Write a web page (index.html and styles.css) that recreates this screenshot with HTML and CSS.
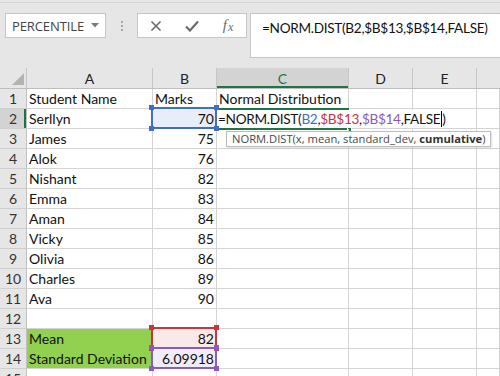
FILE: index.html
```html
<!DOCTYPE html>
<html>
<head>
<meta charset="utf-8">
<link rel="stylesheet" href="styles.css">
</head>
<body>
<div class="app">
  <div class="fbar">
    <div class="namebox">
      <span class="nb-text">PERCENTILE</span>
      <svg class="nb-arrow" width="8" height="5" viewBox="0 0 8 5"><path d="M0 0H8L4 4.5Z" fill="#7a7a7a"/></svg>
    </div>
    <div class="grip"><i></i><i></i><i></i></div>
    <div class="fxbox">
      <span class="fxbtn"><svg width="12" height="12" viewBox="0 0 12 12"><path d="M1.5 1.5L10.5 10.5M10.5 1.5L1.5 10.5" stroke="#6a6a6a" stroke-width="1.6" fill="none"/></svg></span>
      <span class="fxbtn"><svg width="14" height="12" viewBox="0 0 14 12"><path d="M1 6.5L5 10.5L13 1.5" stroke="#6a6a6a" stroke-width="2.2" fill="none"/></svg></span>
      <span class="fxbtn fx"><i>f</i><i class="x">x</i></span>
    </div>
    <div class="formula">=NORM.DIST(B2,$B$13,$B$14,FALSE)</div>
  </div>

  <div class="grid">
    <div class="ch corner"><svg width="12" height="12" viewBox="0 0 12 12"><path d="M12 0V12H0Z" fill="#b3b3b3"/></svg></div>
    <div class="ch">A</div>
    <div class="ch">B</div>
    <div class="ch ch-sel">C</div>
    <div class="ch">D</div>
    <div class="ch">E</div>
    <div class="ch ch-last"></div>

    <div class="rh">1</div><div class="c">Student Name</div><div class="c">Marks</div><div class="c">Normal Distribution</div><div class="c"></div><div class="c"></div><div class="c"></div>

    <div class="rh rh-sel">2</div><div class="c">Serllyn</div>
    <div class="c n sel-b2">70<span class="selbox blue"><b class="h tl"></b><b class="h tr"></b><b class="h bl"></b><b class="h br"></b></span></div>
    <div class="c edit"><span class="etext">=NORM.DIST(<span class="cb">B2</span>,<span class="cr">$B$13</span>,<span class="cp">$B$14</span>,FALSE<span class="caret"></span>)</span><b class="fill-h"></b></div>
    <div class="c"></div><div class="c"></div><div class="c"></div>

    <div class="rh">3</div><div class="c">James</div><div class="c n">75</div>
    <div class="c tipcell"><div class="tip">NORM.DIST(x, mean, standard_dev, <b>cumulative</b>)</div></div>
    <div class="c"></div><div class="c"></div><div class="c"></div>

    <div class="rh">4</div><div class="c">Alok</div><div class="c n">76</div><div class="c"></div><div class="c"></div><div class="c"></div><div class="c"></div>
    <div class="rh">5</div><div class="c">Nishant</div><div class="c n">82</div><div class="c"></div><div class="c"></div><div class="c"></div><div class="c"></div>
    <div class="rh">6</div><div class="c">Emma</div><div class="c n">83</div><div class="c"></div><div class="c"></div><div class="c"></div><div class="c"></div>
    <div class="rh">7</div><div class="c">Aman</div><div class="c n">84</div><div class="c"></div><div class="c"></div><div class="c"></div><div class="c"></div>
    <div class="rh">8</div><div class="c">Vicky</div><div class="c n">85</div><div class="c"></div><div class="c"></div><div class="c"></div><div class="c"></div>
    <div class="rh">9</div><div class="c">Olivia</div><div class="c n">86</div><div class="c"></div><div class="c"></div><div class="c"></div><div class="c"></div>
    <div class="rh">10</div><div class="c">Charles</div><div class="c n">89</div><div class="c"></div><div class="c"></div><div class="c"></div><div class="c"></div>
    <div class="rh">11</div><div class="c">Ava</div><div class="c n">90</div><div class="c"></div><div class="c"></div><div class="c"></div><div class="c"></div>
    <div class="rh">12</div><div class="c"></div><div class="c"></div><div class="c"></div><div class="c"></div><div class="c"></div><div class="c"></div>

    <div class="rh">13</div><div class="c green green-top">Mean</div>
    <div class="c n sel-red">82<span class="selbox red"><b class="h tl"></b><b class="h tr"></b><b class="h bl"></b><b class="h br"></b></span></div>
    <div class="c"></div><div class="c"></div><div class="c"></div><div class="c"></div>

    <div class="rh">14</div><div class="c green">Standard Deviation</div>
    <div class="c n sel-purple">6.09918<span class="selbox purple"><b class="h tl"></b><b class="h tr"></b><b class="h bl"></b><b class="h br"></b></span></div>
    <div class="c"></div><div class="c"></div><div class="c"></div><div class="c"></div>

    <div class="rh">15</div><div class="c"></div><div class="c"></div><div class="c"></div><div class="c"></div><div class="c"></div><div class="c"></div>
  </div>
</div>
</body>
</html>
```

FILE: styles.css
```css
* { box-sizing: border-box; }
html, body { margin: 0; padding: 0; }
body {
  width: 500px;
  height: 376px;
  overflow: hidden;
  background: #e6e6e6;
  font-family: "Lato", "Liberation Sans", sans-serif;
}
.app { width: 500px; }

/* formula bar */
.fbar {
  display: flex;
  align-items: flex-start;
  margin-top: 2px;
  border-top: 1px solid #d5d5d5;
  padding: 10px 0 10px 5px;
  height: 66px;
}
.namebox {
  width: 101px;
  height: 25px;
  background: #fff;
  border: 1px solid #c6c6c6;
  display: flex;
  align-items: center;
  justify-content: space-between;
  padding: 0 6px 0 6px;
  font-family: "Open Sans", "Noto Sans", sans-serif;
  font-size: 13px;
  color: #444;
}
.nb-text { letter-spacing: -0.1px; }
.grip {
  width: 31px;
  height: 25px;
  display: flex;
  flex-direction: column;
  align-items: center;
  justify-content: center;
  gap: 2px;
}
.grip i { display: block; width: 2px; height: 2px; background: #a8a8a8; }
.fxbox {
  width: 110px;
  height: 25px;
  background: #fff;
  border: 1px solid #c6c6c6;
  display: flex;
  align-items: center;
}
.fxbtn {
  width: 36px;
  height: 23px;
  display: flex;
  align-items: center;
  justify-content: center;
}
.fx {
  font-family: "Liberation Serif", serif;
  font-style: italic;
  color: #6a6a6a;
  font-size: 15px;
}
.fx i { font-style: italic; }
.fx .x { font-size: 12px; margin-left: 1px; margin-top: 3px; }
.formula {
  flex: 1;
  margin-left: 3px;
  height: 45px;
  background: #fff;
  border: 1px solid #c6c6c6;
  border-right: none;
  padding: 6px 0 0 11px;
  font-family: "Lato", "Liberation Sans", sans-serif;
  font-size: 13.6px;
  letter-spacing: -0.3px;
  color: #111;
  white-space: nowrap;
  overflow: hidden;
}

/* grid */
.grid {
  display: grid;
  grid-template-columns: 27px 126px 64px 132px 64px 64px 1fr;
  grid-template-rows: 21px repeat(15, 20px);
  background: #fff;
  font-size: 14px;
  color: #111;
}
.ch {
  background: #e6e6e6;
  border-right: 1px solid #c6c6c6;
  border-bottom: 1px solid #bdbdbd;
  display: flex;
  align-items: center;
  justify-content: center;
  color: #222;
  font-size: 14px;
  padding-top: 1px;
}
.ch.corner { justify-content: flex-end; align-items: flex-end; padding: 0 2px 3px 0; }
.ch-sel { background: #d3d3d3; color: #217346; box-shadow: inset 0 -2px 0 #217346; }
.ch-last { border-right: none; }
.rh {
  background: #e6e6e6;
  border-right: 1px solid #c0c0c0;
  border-bottom: 1px solid #cfcfcf;
  display: flex;
  align-items: center;
  justify-content: center;
  color: #333;
  font-size: 14px;
}
.rh-sel { background: #d3d3d3; box-shadow: inset -2px 0 0 #217346; }
.c {
  border-right: 1px solid #d4d4d4;
  border-bottom: 1px solid #d4d4d4;
  padding: 0 2px;
  line-height: 19px;
  white-space: nowrap;
  position: relative;
}
.c.n { text-align: right; }

.green { background: #92d050; }
.green-top { border-bottom-color: #92d050; }

.sel-b2 { background: #e8eef9; }
.sel-red { background: #f9e9e9; }
.sel-purple { background: #f0ecf8; }

.selbox {
  position: absolute;
  left: -2px; top: -2px; right: -1px; bottom: -1px;
  border: 2px solid;
  z-index: 3;
}
.selbox.blue { border-color: #3f6fc5; }
.selbox.red { border-color: #c9353f; }
.selbox.purple { border-color: #8a5bbd; }
.h {
  position: absolute;
  width: 5px; height: 5px;
}
.blue .h { background: #3f6fc5; }
.red .h { background: #c9353f; }
.purple .h { background: #8a5bbd; }
.h.tl { left: -4px; top: -4px; }
.h.tr { right: -4px; top: -4px; }
.h.bl { left: -4px; bottom: -4px; }
.h.br { right: -4px; bottom: -4px; }

.edit {
  z-index: 2;
  overflow: visible;
  padding: 0;
  border-right: none;
  box-shadow: inset 0 2px 0 #217346, inset 0 -2px 0 #217346;
  border-left: 2px solid #217346;
  margin-left: -2px;
  margin-top: -1px;
  line-height: 21px;
  height: 22px;
  border-bottom: none;
}
.etext {
  display: inline-block;
  background: #fff;
  padding: 0 6px 0 1px;
  line-height: 18px;
  margin-top: 2px;
  color: #111;
  font-size: 13.6px;
  letter-spacing: -0.3px;
}
.cb { color: #3f6fc5; }
.cr { color: #c9353f; }
.cp { color: #8a5bbd; }
.caret {
  display: inline-block;
  width: 1px;
  height: 16px;
  background: #000;
  vertical-align: -3px;
  margin-left: 1px;
}
.fill-h {
  position: absolute;
  right: -3px;
  bottom: -2px;
  width: 5px;
  height: 5px;
  background: #217346;
  border: 1px solid #fff;
}

.tipcell { z-index: 4; overflow: visible; }
.tip {
  position: absolute;
  left: 9px;
  top: 2px;
  height: 16px;
  padding: 0 4px 0 5px;
  background: #fff;
  border: 1px solid #bcbcbc;
  box-shadow: 1px 1px 2px rgba(0,0,0,0.12);
  font-family: "Open Sans", "Noto Sans", sans-serif;
  font-size: 11.2px;
  line-height: 14px;
  color: #4a4a4a;
  white-space: nowrap;
}
.tip b { color: #333; }
```
